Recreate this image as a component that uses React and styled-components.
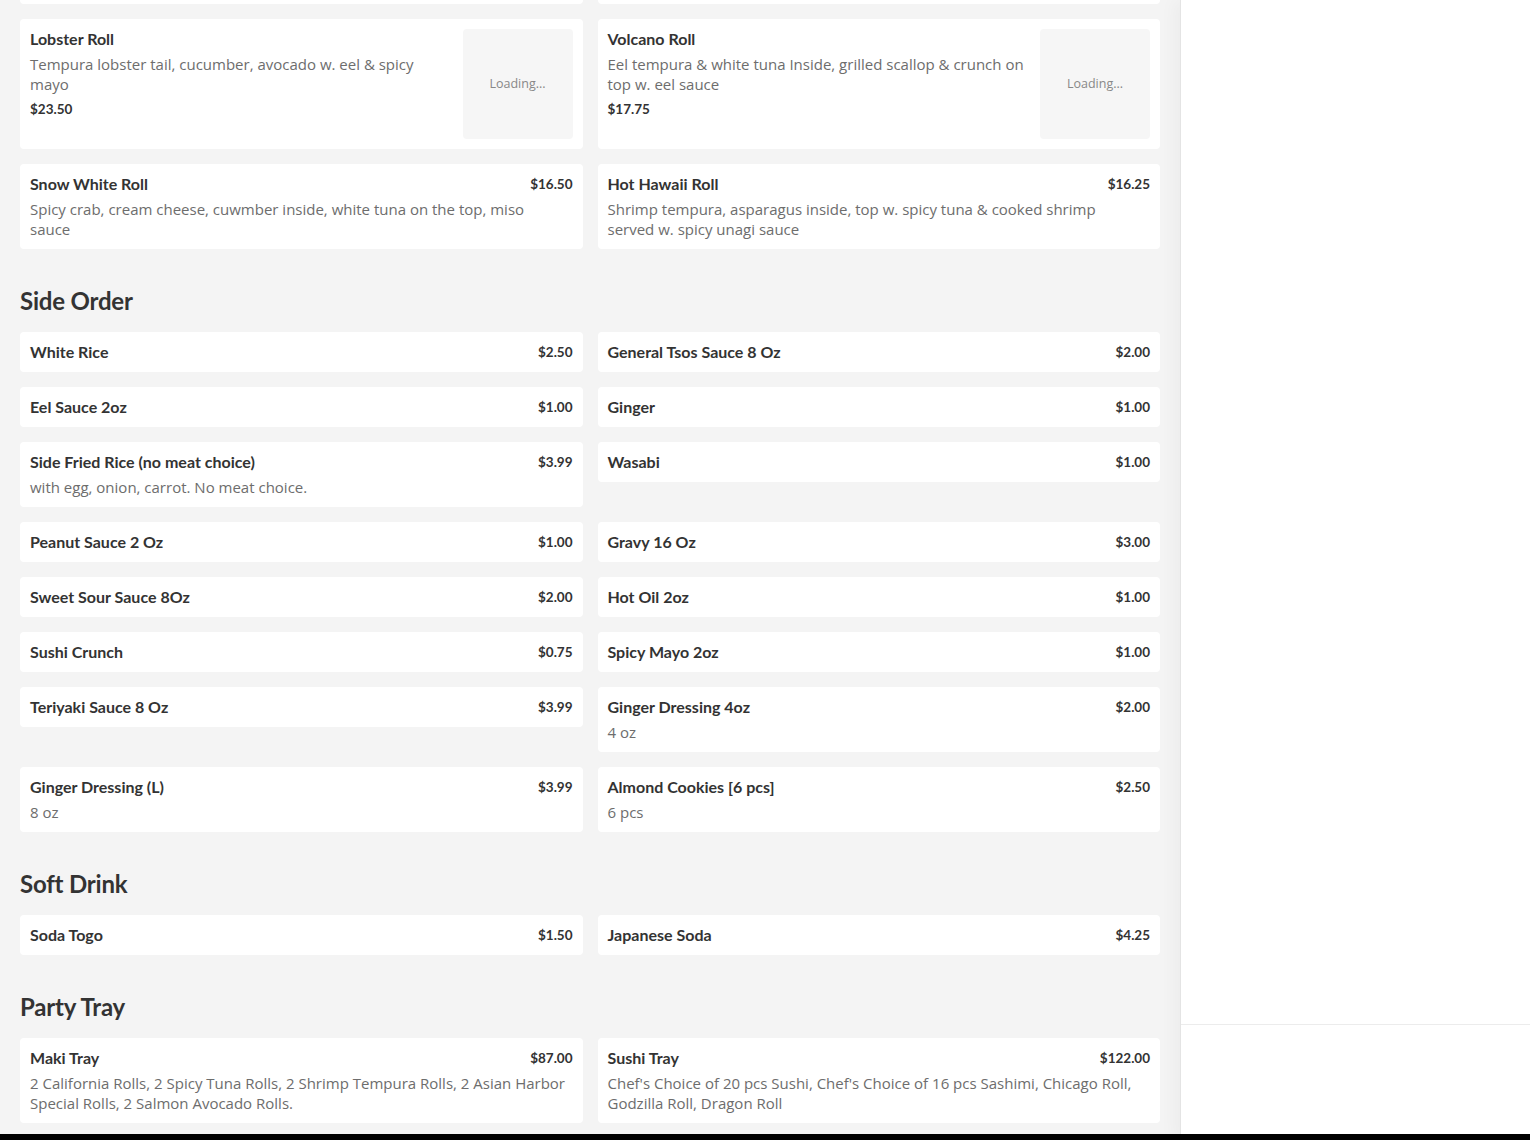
import React from 'react';
import styled, { createGlobalStyle } from 'styled-components';

const GlobalStyle = createGlobalStyle`
  html, body {
    margin: 0;
    padding: 0;
    height: 100%;
    overflow: hidden;
    background: #f4f4f4;
  }
  * { box-sizing: border-box; }
`

const Page = styled.div`
  display: flex;
  height: 1140px;
  width: 1530px;
  overflow: hidden;
  position: relative;
  font-family: "Lato", "Liberation Sans", sans-serif;
`

const Menu = styled.main`
  width: 1180px;
  flex-shrink: 0;
  padding: 0 20px;
  background: #f4f4f4;
  overflow: hidden;
`

const Section = styled.section`
  display: flex;
  flex-direction: column;
`

const SectionTitle = styled.h2`
  margin: 37px 0 16px;
  height: 30px;
  line-height: 30px;
  font-size: 24px;
  font-weight: 700;
  color: #333;
  letter-spacing: -0.2px;
`

const Grid = styled.div`
  display: grid;
  grid-template-columns: 1fr 1fr;
  column-gap: 15px;
  row-gap: 15px;
  align-items: start;
`

const Tail = styled.div`
  height: 4px;
  background: #fff;
  border-radius: 0 0 4px 4px;
`

const Card = styled.div`
  display: flex;
  gap: 16px;
  background: #fff;
  border-radius: 4px;
  padding: 10px;
`

const Body = styled.div`
  flex: 1;
  min-width: 0;
  display: flex;
  flex-direction: column;
`

const Head = styled.div`
  display: flex;
  justify-content: space-between;
  align-items: center;
  gap: 12px;
`

const Name = styled.div`
  font-size: 16px;
  line-height: 20px;
  font-weight: 700;
  color: #333;
`

const Price = styled.div`
  font-size: 13.5px;
  line-height: 20px;
  font-weight: 700;
  color: #333;
  white-space: nowrap;
  margin-top: ${p => (p.$below ? '5px' : '0')};
`

const Desc = styled.p`
  margin: 5px 0 0;
  font-family: "Open Sans", "Liberation Sans", sans-serif;
  font-size: 15px;
  line-height: 20px;
  font-weight: 400;
  color: #6d6d6d;
  padding-right: ${p => (p.$wide ? '5px' : '0')};
`

const Thumb = styled.div`
  width: 110px;
  height: 110px;
  flex-shrink: 0;
  border-radius: 4px;
  background: #f6f6f6;
  display: flex;
  align-items: center;
  justify-content: center;
  padding-bottom: 2px;
  font-family: "Open Sans", "Liberation Sans", sans-serif;
  font-size: 12.5px;
  color: #888;
`

const Sidebar = styled.aside`
  flex: 1;
  background: #fff;
  border-left: 1px solid #e4e4e4;
  box-shadow: -6px 0 16px rgba(0, 0, 0, 0.035);
  display: flex;
  flex-direction: column;
`

const SideSpacer = styled.div`
  height: 1024px;
  flex-shrink: 0;
`

const SideFooter = styled.div`
  flex: 1;
  border-top: 1px solid #ececec;
`

const BottomBar = styled.div`
  position: absolute;
  left: 0;
  right: 0;
  bottom: 0;
  height: 6px;
  background: #000;
`

const rolls = [
  { name: 'Lobster Roll', price: '$23.50', desc: 'Tempura lobster tail, cucumber, avocado w. eel & spicy mayo', image: true },
  { name: 'Volcano Roll', price: '$17.75', desc: 'Eel tempura & white tuna Inside, grilled scallop & crunch on top w. eel sauce', image: true },
  { name: 'Snow White Roll', price: '$16.50', desc: 'Spicy crab, cream cheese, cuwmber inside, white tuna on the top, miso sauce' },
  { name: 'Hot Hawaii Roll', price: '$16.25', desc: 'Shrimp tempura, asparagus inside, top w. spicy tuna & cooked shrimp served w. spicy unagi sauce' },
];

const sections = [
  {
    title: 'Side Order',
    items: [
      { name: 'White Rice', price: '$2.50' },
      { name: 'General Tsos Sauce 8 Oz', price: '$2.00' },
      { name: 'Eel Sauce 2oz', price: '$1.00' },
      { name: 'Ginger', price: '$1.00' },
      { name: 'Side Fried Rice (no meat choice)', price: '$3.99', desc: 'with egg, onion, carrot. No meat choice.' },
      { name: 'Wasabi', price: '$1.00' },
      { name: 'Peanut Sauce 2 Oz', price: '$1.00' },
      { name: 'Gravy 16 Oz', price: '$3.00' },
      { name: 'Sweet Sour Sauce 8Oz', price: '$2.00' },
      { name: 'Hot Oil 2oz', price: '$1.00' },
      { name: 'Sushi Crunch', price: '$0.75' },
      { name: 'Spicy Mayo 2oz', price: '$1.00' },
      { name: 'Teriyaki Sauce 8 Oz', price: '$3.99' },
      { name: 'Ginger Dressing 4oz', price: '$2.00', desc: '4 oz' },
      { name: 'Ginger Dressing (L)', price: '$3.99', desc: '8 oz' },
      { name: 'Almond Cookies [6 pcs]', price: '$2.50', desc: '6 pcs' },
    ],
  },
  {
    title: 'Soft Drink',
    items: [
      { name: 'Soda Togo', price: '$1.50' },
      { name: 'Japanese Soda', price: '$4.25' },
    ],
  },
  {
    title: 'Party Tray',
    items: [
      { name: 'Maki Tray', price: '$87.00', desc: '2 California Rolls, 2 Spicy Tuna Rolls, 2 Shrimp Tempura Rolls, 2 Asian Harbor Special Rolls, 2 Salmon Avocado Rolls.' },
      { name: 'Sushi Tray', price: '$122.00', desc: "Chef's Choice of 20 pcs Sushi, Chef's Choice of 16 pcs Sashimi, Chicago Roll, Godzilla Roll, Dragon Roll" },
    ],
  },
];

const MenuItem = ({ item }) => {
  if (item.image) {
    return (
      <Card>
        <Body>
          <Name>{item.name}</Name>
          <Desc>{item.desc}</Desc>
          <Price $below>{item.price}</Price>
        </Body>
        <Thumb>Loading...</Thumb>
      </Card>
    );
  }
  return (
    <Card>
      <Body>
        <Head>
          <Name>{item.name}</Name>
          <Price>{item.price}</Price>
        </Head>
        {item.desc && <Desc $wide>{item.desc}</Desc>}
      </Body>
    </Card>
  );
};

const App = () => {
  return (
    <>
      <GlobalStyle />
      <Page>
        <Menu>
          <Grid>
            <Tail />
            <Tail />
            {rolls.map((item) => (
              <MenuItem key={item.name} item={item} />
            ))}
          </Grid>
          {sections.map((section) => (
            <Section key={section.title}>
              <SectionTitle>{section.title}</SectionTitle>
              <Grid>
                {section.items.map((item) => (
                  <MenuItem key={item.name} item={item} />
                ))}
              </Grid>
            </Section>
          ))}
        </Menu>
        <Sidebar>
          <SideSpacer />
          <SideFooter />
        </Sidebar>
        <BottomBar />
      </Page>
    </>
  );
};

export default App;
